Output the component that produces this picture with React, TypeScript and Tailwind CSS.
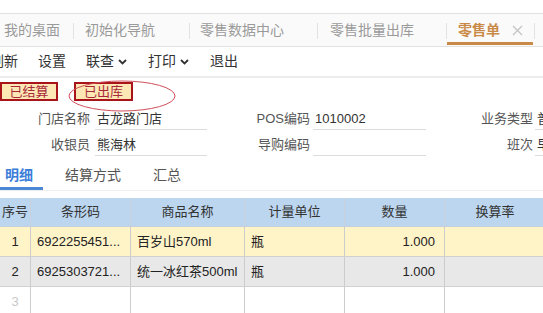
import React from "react";

const tabs = [
    { label: "我的桌面", w: "w-[74px]", pl: "pl-[4px]" },
    { label: "初始化导航", w: "w-[116px]", pl: "pl-[11px]" },
    { label: "零售数据中心", w: "w-[128px]", pl: "pl-[10px]" },
    { label: "零售批量出库", w: "w-[129px]", pl: "pl-[12px]" },
];

const rows = [
    { no: "1", code: "6922255451...", name: "百岁山570ml", unit: "瓶", qty: "1.000", bg: "bg-[#fff3c8]" },
    { no: "2", code: "6925303721...", name: "统一冰红茶500ml", unit: "瓶", qty: "1.000", bg: "bg-[#e8e8e8]" },
    { no: "3", code: "", name: "", unit: "", qty: "", bg: "bg-white" },
];

const Chevron = () => (
    <svg width="9" height="6" viewBox="0 0 9 6" className="ml-[4px] mt-[1px]">
        <path d="M1 1 L4.5 4.5 L8 1" fill="none" stroke="#333" strokeWidth="1.8" />
    </svg>
);

const Field: React.FC<{ label: string; value: string; lw: string; vw: string; lpr: string }> = ({ label, value, lw, vw, lpr }) => (
    <>
        <div className={`${lw} ${lpr} text-right text-[#555] shrink-0`}>{label}</div>
        <div className={`${vw} shrink-0 border-b border-[#dcdcdc] h-full flex items-center pl-[2px] text-[#333]`}>{value}</div>
    </>
);

export default function App() {
    return (
        <div className="w-[543px] h-[313px] overflow-hidden bg-white relative text-[13px]" style={{ fontFamily: '"Liberation Sans", "Noto Sans CJK SC", sans-serif' }}>
            <div className="h-[13px]" />
            {/* tab bar */}
            <div className="h-[34px] border-t border-b border-[#e2e2e2] bg-[#fafafa] flex items-center text-[14px] text-[#9a9a9a]">
                {tabs.map((t) => (
                    <div key={t.label} className={`${t.w} ${t.pl} shrink-0 h-full flex items-center relative`}>
                        <span>{t.label}</span>
                        <span className="absolute right-0 top-[9px] h-[16px] w-px bg-[#e2e2e2]" />
                    </div>
                ))}
                <div className="w-[88px] shrink-0 h-full flex items-center pl-[11px] relative">
                    <span className="text-[#c98a48] font-bold">零售单</span>
                    <svg width="11" height="11" viewBox="0 0 11 11" className="ml-[12px]">
                        <path d="M1 1 L10 10 M10 1 L1 10" stroke="#c4c4c4" strokeWidth="1.3" />
                    </svg>
                    <span className="absolute left-0 right-[2px] bottom-[1px] h-[3px] bg-[#c98a48]" />
                    <span className="absolute right-0 top-[9px] h-[16px] w-px bg-[#e2e2e2]" />
                </div>
            </div>
            {/* toolbar */}
            <div className="h-[31px] flex items-center text-[14px] text-[#333] border-b-2 border-[#ececec]">
                <span className="ml-[-10px]">刷新</span>
                <span className="ml-[20px]">设置</span>
                <span className="ml-[20px] flex items-center">联查<Chevron /></span>
                <span className="ml-[21px] flex items-center">打印<Chevron /></span>
                <span className="ml-[21px]">退出</span>
            </div>
            {/* status */}
            <div className="h-[30px] flex items-start pt-[4px] relative">
                <div className="w-[58px] h-[19px] border-2 border-[#a8141a] bg-[#fde7b4] text-[#a8283a] flex items-center justify-center text-[13px]">已结算</div>
                <div className="ml-[16px] w-[59px] h-[19px] border-2 border-[#a8141a] bg-[#fde7b4] text-[#a8283a] flex items-center justify-center text-[13px]">已出库</div>
                <svg width="110" height="34" viewBox="0 0 110 34" className="absolute left-[67px] top-[1px]">
                    <ellipse cx="55" cy="17" rx="53" ry="15" fill="none" stroke="#d0505a" strokeWidth="1" />
                </svg>
            </div>
            {/* form */}
            <div className="h-[22px] flex items-center">
                <Field label="门店名称" value="古龙路门店" lw="w-[95px]" lpr="pr-[5px]" vw="w-[112px]" />
                <Field label="POS编码" value="1010002" lw="w-[106px]" lpr="pr-[3px]" vw="w-[113px]" />
                <Field label="业务类型" value="普通" lw="w-[109px]" lpr="pr-[2px]" vw="w-[40px]" />
            </div>
            <div className="h-[22px] mt-[4px] flex items-center">
                <Field label="收银员" value="熊海林" lw="w-[95px]" lpr="pr-[5px]" vw="w-[112px]" />
                <Field label="导购编码" value="" lw="w-[106px]" lpr="pr-[3px]" vw="w-[113px]" />
                <Field label="班次" value="早班" lw="w-[109px]" lpr="pr-[2px]" vw="w-[40px]" />
            </div>
            {/* sub tabs */}
            <div className="h-[33px] mt-[2px] flex items-end text-[14px] border-b border-[#eeeeee]">
                <div className="w-[43px] h-full flex items-center pl-[5px] pt-[6px] text-[#3b7dd8] font-bold border-b-[3px] border-[#4a88d6]">明细</div>
                <div className="ml-[22px] h-full flex items-center pt-[3px] text-[#555]">结算方式</div>
                <div className="ml-[32px] h-full flex items-center pt-[3px] text-[#555]">汇总</div>
            </div>
            {/* table */}
            <div className="mt-[7px]">
                <div className="h-[29px] flex bg-[#bcd6f0] text-[#333] text-[13px] border-b border-[#c4cfdc]">
                    <div className="w-[31px] shrink-0 flex items-center justify-center border-r border-[#c8d2de]">序号</div>
                    <div className="w-[100px] shrink-0 flex items-center justify-center border-r border-[#c8d2de]">条形码</div>
                    <div className="w-[114px] shrink-0 flex items-center justify-center border-r border-[#c8d2de]">商品名称</div>
                    <div className="w-[100px] shrink-0 flex items-center justify-center border-r border-[#c8d2de]">计量单位</div>
                    <div className="w-[100px] shrink-0 flex items-center justify-center border-r border-[#c8d2de]">数量</div>
                    <div className="w-[100px] shrink-0 flex items-center justify-center">换算率</div>
                </div>
                {rows.map((r) => (
                    <div key={r.no} className={`h-[30px] flex ${r.bg} text-[#222] border-b border-[#d0d0d0]`}>
                        <div className={`w-[31px] shrink-0 flex items-center justify-center border-r border-[#cccccc] ${r.no === "3" ? "text-[#c8c8c8]" : ""}`}>{r.no}</div>
                        <div className="w-[100px] shrink-0 flex items-center pl-[6px] border-r border-[#cccccc]">{r.code}</div>
                        <div className="w-[114px] shrink-0 flex items-center pl-[6px] border-r border-[#cccccc]">{r.name}</div>
                        <div className="w-[100px] shrink-0 flex items-center pl-[6px] border-r border-[#cccccc]">{r.unit}</div>
                        <div className="w-[100px] shrink-0 flex items-center justify-end pr-[9px] border-r border-[#cccccc]">{r.qty}</div>
                        <div className="w-[100px] shrink-0" />
                    </div>
                ))}
            </div>
        </div>
    );
}
